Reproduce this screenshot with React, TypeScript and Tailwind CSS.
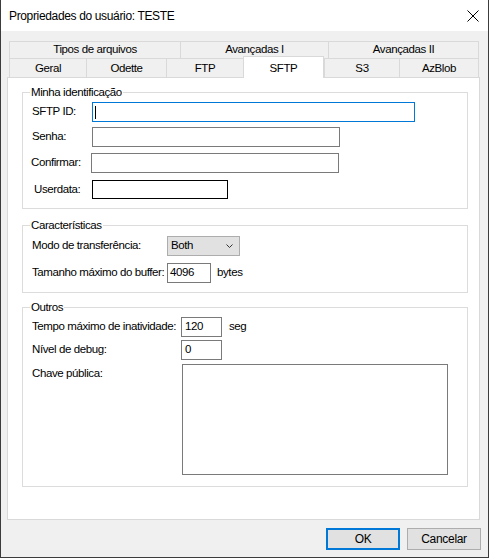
const TOP_TABS = [
  { label: "Tipos de arquivos", cls: "w-[171px]" },
  { label: "Avançadas I", cls: "w-[148px]" },
  { label: "Avançadas II", cls: "w-[151px] border-r" },
];

const BOTTOM_TABS = [
  { label: "Geral", cls: "w-[77px]" },
  { label: "Odette", cls: "w-[80px]" },
  { label: "FTP", cls: "w-[77px]" },
  { label: "SFTP", cls: "w-[81px]", active: true },
  { label: "S3", cls: "w-[75px]" },
  { label: "AzBlob", cls: "w-[80px] border-r" },
];

function GroupBox({
  title,
  className,
  children,
}: {
  title: string;
  className?: string;
  children: React.ReactNode;
}) {
  return (
    <div className={`relative border border-[#dcdcdc] ${className ?? ""}`}>
      <span className="absolute -top-[8px] left-[7px] bg-white px-px leading-[14px] whitespace-nowrap">{title}</span>
      {children}
    </div>
  );
}

function Label({ className, children }: { className: string; children: React.ReactNode }) {
  return <span className={`shrink-0 whitespace-nowrap ${className}`}>{children}</span>;
}

function TextBox({ className, value }: { className: string; value?: string }) {
  return (
    <div className={`shrink-0 h-[20px] border flex items-center pl-[2px] ${className}`}>
      {value}
    </div>
  );
}

export default function App() {
  return (
    <div className="w-[489px] h-[558px] flex flex-col border-x border-b border-[#3c3c3c] bg-[#f0f0f0] text-black font-['Liberation_Sans',Arial,sans-serif] select-none">
      {/* Title bar */}
      <div className="h-[31px] shrink-0 bg-white flex items-center justify-between pl-[8px] pr-[8px] text-[12px] tracking-[-0.35px]">
        <span>Propriedades do usuário: TESTE</span>
        <svg width="12" height="12" viewBox="0 0 12 12" className="mr-px">
          <path d="M0.5 0.5 L11.5 11.5 M11.5 0.5 L0.5 11.5" stroke="#000" strokeWidth="1" />
        </svg>
      </div>

      <div className="flex flex-col px-[6px] text-[11.5px] tracking-[-0.4px]">
        {/* Tab strip, two rows */}
        <div className="ml-[2px] mt-[10px] flex">
          {TOP_TABS.map((t) => (
            <div
              key={t.label}
              className={`h-[17px] border-l border-t border-[#d9d9d9] flex items-center justify-center ${t.cls}`}
            >
              {t.label}
            </div>
          ))}
        </div>
        <div className="ml-[2px] flex items-start">
          {BOTTOM_TABS.map((t) =>
            t.active ? (
              <div
                key={t.label}
                className={`relative z-10 -mt-[2px] -mb-px h-[22px] bg-white border-x border-t border-[#d9d9d9] flex items-start justify-center pt-[3px] ${t.cls}`}
              >
                {t.label}
              </div>
            ) : (
              <div
                key={t.label}
                className={`h-[19px] border-l border-t border-[#d9d9d9] flex items-center justify-center pt-px ${t.cls}`}
              >
                {t.label}
              </div>
            )
          )}
        </div>

        {/* Page */}
        <div className="w-[473px] h-[443px] bg-white border border-[#d9d9d9] pl-[14px] pt-[14px]">
          <GroupBox title="Minha identificação" className="w-[446px] pt-[9px] pb-[9px] pl-[8px]">
            <div className="flex flex-col gap-[5px]">
              <div className="flex items-center">
                <Label className="w-[60px] ml-px">SFTP ID:</Label>
                <div className="shrink-0 w-[323px] h-[20px] border border-[#0078d7] flex items-center pl-[2px]">
                  <span className="w-px h-[13px] bg-black" />
                </div>
              </div>
              <div className="flex items-center">
                <Label className="w-[60px] ml-px">Senha:</Label>
                <TextBox className="w-[248px] border-[#7a7a7a]" />
              </div>
              <div className="flex items-center mt-px">
                <Label className="w-[61px] -ml-px pl-px">Confirmar:</Label>
                <TextBox className="w-[248px] border-[#7a7a7a]" />
              </div>
              <div className="flex items-center mt-[2px]">
                <Label className="w-[58px] ml-[3px]">Userdata:</Label>
                <div className="shrink-0 w-[136px] h-[19px] border border-black" />
              </div>
            </div>
          </GroupBox>

          <GroupBox title="Características" className="w-[446px] mt-[16px] pt-[10px] pb-[9px] pl-[8px]">
            <div className="flex flex-col gap-[7px]">
              <div className="flex items-center">
                <Label className="w-[135px] ml-px">Modo de transferência:</Label>
                <div className="shrink-0 w-[73px] h-[20px] bg-[#e1e1e1] border border-[#adadad] flex items-center justify-between pl-[3px] pr-[6px]">
                  <span>Both</span>
                  <svg width="7" height="4" viewBox="0 0 7 4">
                    <path d="M0.5 0.5 L3.5 3.5 L6.5 0.5" fill="none" stroke="#333" strokeWidth="1" />
                  </svg>
                </div>
              </div>
              <div className="flex items-center">
                <Label className="w-[135px] ml-px">Tamanho máximo do buffer:</Label>
                <TextBox className="w-[44px] border-[#7a7a7a]" value="4096" />
                <span className="ml-[6px]">bytes</span>
              </div>
            </div>
          </GroupBox>

          <GroupBox title="Outros" className="w-[446px] mt-[14px] h-[180px] pt-[9px] pl-[8px]">
            <div className="flex flex-col">
              <div className="flex items-center">
                <Label className="w-[149px] ml-px">Tempo máximo de inatividade:</Label>
                <TextBox className="w-[41px] border-[#7a7a7a] pl-[3px]" value="120" />
                <span className="ml-[7px]">seg</span>
              </div>
              <div className="flex items-center mt-[3px]">
                <Label className="w-[149px] ml-px">Nível de debug:</Label>
                <TextBox className="w-[41px] border-[#7a7a7a] pl-[3px]" value="0" />
              </div>
              <div className="flex items-start mt-[4px]">
                <Label className="w-[150px] ml-px pt-px">Chave pública:</Label>
                <div className="shrink-0 w-[266px] h-[111px] border border-[#7a7a7a]" />
              </div>
            </div>
          </GroupBox>
        </div>

        {/* Dialog buttons */}
        <div className="mt-[8px] flex justify-end gap-[7px] pr-[1px] text-[12px] tracking-[-0.3px]">
          <button className="w-[74px] h-[22px] bg-[#e1e1e1] border-2 border-[#0078d7]">OK</button>
          <button className="w-[74px] h-[22px] bg-[#e1e1e1] border border-[#adadad]">Cancelar</button>
        </div>
      </div>
    </div>
  );
}
